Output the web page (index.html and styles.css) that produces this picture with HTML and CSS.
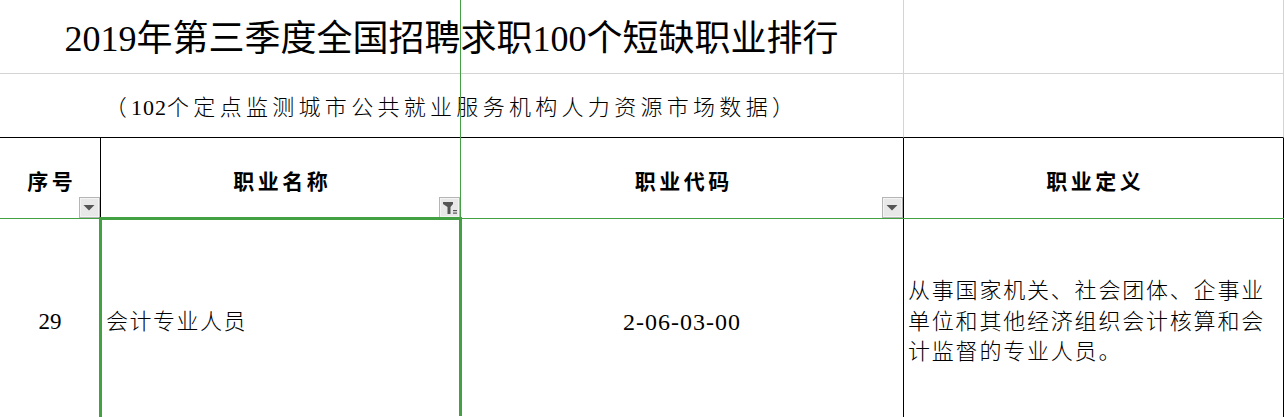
FILE: index.html
```html
<!DOCTYPE html>
<html lang="zh-CN">
<head>
<meta charset="utf-8">
<title>2019年第三季度全国招聘求职100个短缺职业排行</title>
<link rel="stylesheet" href="styles.css">
</head>
<body>
<div class="sheet">
  <div class="cell title span3">2019年第三季度全国招聘求职100个短缺职业排行</div>
  <div class="cell top-d"></div>

  <div class="cell subtitle span3">（<span class="num">102</span>个定点监测城市公共就业服务机构人力资源市场数据）</div>
  <div class="cell sub-d"></div>

  <div class="cell head col-a">序号
    <span class="dd"><svg width="19" height="19" viewBox="0 0 19 19"><polygon points="3.5,7 14.5,7 9,12.5" fill="#555"/></svg></span>
  </div>
  <div class="cell head col-b">职业名称
    <span class="dd"><svg width="19" height="19" viewBox="0 0 19 19"><path d="M3 4 H13 V6 L10.5 9 V16 H7.5 V9 L3 6 Z" fill="#555"/><rect x="13" y="12" width="4" height="1.2" fill="#555"/><rect x="13" y="14.5" width="4" height="1.2" fill="#555"/></svg></span>
  </div>
  <div class="cell head col-c">职业代码
    <span class="dd"><svg width="19" height="19" viewBox="0 0 19 19"><polygon points="3.5,7 14.5,7 9,12.5" fill="#555"/></svg></span>
  </div>
  <div class="cell head col-d">职业定义</div>

  <div class="cell data col-a"><span class="num big">29</span></div>
  <div class="cell data col-b left"><span class="name">会计专业人员</span><span class="selection"></span></div>
  <div class="cell data col-c"><span class="num code">2-06-03-00</span></div>
  <div class="cell data col-d left"><p class="def">从事国家机关、社会团体、企事业单位和其他经济组织会计核算和会计监督的专业人员。</p></div>

  <div class="freeze-v"></div>
  <div class="freeze-h"></div>
</div>
</body>
</html>
```

FILE: styles.css
```css
* { box-sizing: border-box; }
html, body {
  margin: 0;
  padding: 0;
  background: #fff;
  overflow: hidden;
}
body {
  width: 1284px;
  height: 417px;
  font-family: "Liberation Serif", "Noto Sans CJK SC", serif;
  color: #000;
}
.sheet {
  position: relative;
  display: grid;
  grid-template-columns: 101px 360px 443px 380px 1px;
  grid-template-rows: 74px 64px 81px 202px;
  width: 1285px;
}
.cell {
  position: relative;
  display: flex;
  align-items: center;
  justify-content: center;
  white-space: nowrap;
}
.span3 { grid-column: 1 / span 3; }

.title {
  grid-row: 1;
  font-size: 36px;
  line-height: 40px;
  padding-top: 4px;
  border-right: 1px solid #d4d4d4;
  border-bottom: 1px solid #d4d4d4;
}
.top-d {
  grid-column: 4;
  grid-row: 1;
  border-right: 1px solid #d4d4d4;
  border-bottom: 1px solid #d4d4d4;
}
.subtitle {
  grid-row: 2;
  font-size: 22px;
  font-weight: 300;
  line-height: 26px;
  letter-spacing: 4.3px;
  padding-top: 5px;
  border-right: 1px solid #d4d4d4;
  border-bottom: 1px solid #000;
}
.subtitle .num { letter-spacing: 1px; }
.sub-d {
  grid-column: 4;
  grid-row: 2;
  border-right: 1px solid #d4d4d4;
  border-bottom: 1px solid #000;
}

.head {
  grid-row: 3;
  font-size: 21px;
  font-weight: 700;
  line-height: 26px;
  letter-spacing: 3.5px;
  padding-left: 3.5px;
  padding-top: 7px;
  border-right: 1px solid #000;
  border-bottom: 1px solid #000;
}
.col-a { grid-column: 1; }
.col-b { grid-column: 2; }
.col-c { grid-column: 3; }
.col-d { grid-column: 4; }

.dd {
  position: absolute;
  right: 0;
  bottom: 0;
  width: 21px;
  height: 21px;
  background: #e8e8e8;
  border: 1px solid #b5b5b5;
  box-shadow: inset 0 0 0 1px #f4f4f4;
  display: flex;
  align-items: center;
  justify-content: center;
}
.dd svg { display: block; }

.data {
  grid-row: 4;
  border-right: 1px solid #000;
  padding-top: 4px;
}
.data.left { justify-content: flex-start; }
.num.big { font-size: 23px; line-height: 28px; }
.num.code { font-size: 24px; line-height: 28px; letter-spacing: 1px; }
.name {
  font-size: 22px;
  font-weight: 300;
  line-height: 28px;
  letter-spacing: 1.5px;
  padding-left: 5px;
}
.def {
  margin: 0;
  padding-left: 4px;
  width: 364px;
  white-space: normal;
  font-size: 22px;
  font-weight: 300;
  line-height: 30.5px;
  letter-spacing: 1.8px;
  word-break: break-all;
}

.selection {
  position: absolute;
  left: -2px;
  top: -2px;
  width: 363px;
  height: 205px;
  border: 3px solid #43a143;
  z-index: 3;
}
.selection::after {
  content: "";
  position: absolute;
  right: -4px;
  bottom: -4px;
  width: 5px;
  height: 5px;
  background: #43a143;
  border: 1px solid #fff;
}

.freeze-v {
  position: absolute;
  left: 460px;
  top: 0;
  width: 1px;
  height: 417px;
  background: #43a143;
  z-index: 2;
}
.freeze-h {
  position: absolute;
  left: 0;
  top: 218px;
  width: 1284px;
  height: 1px;
  background: #43a143;
  z-index: 2;
}
```
